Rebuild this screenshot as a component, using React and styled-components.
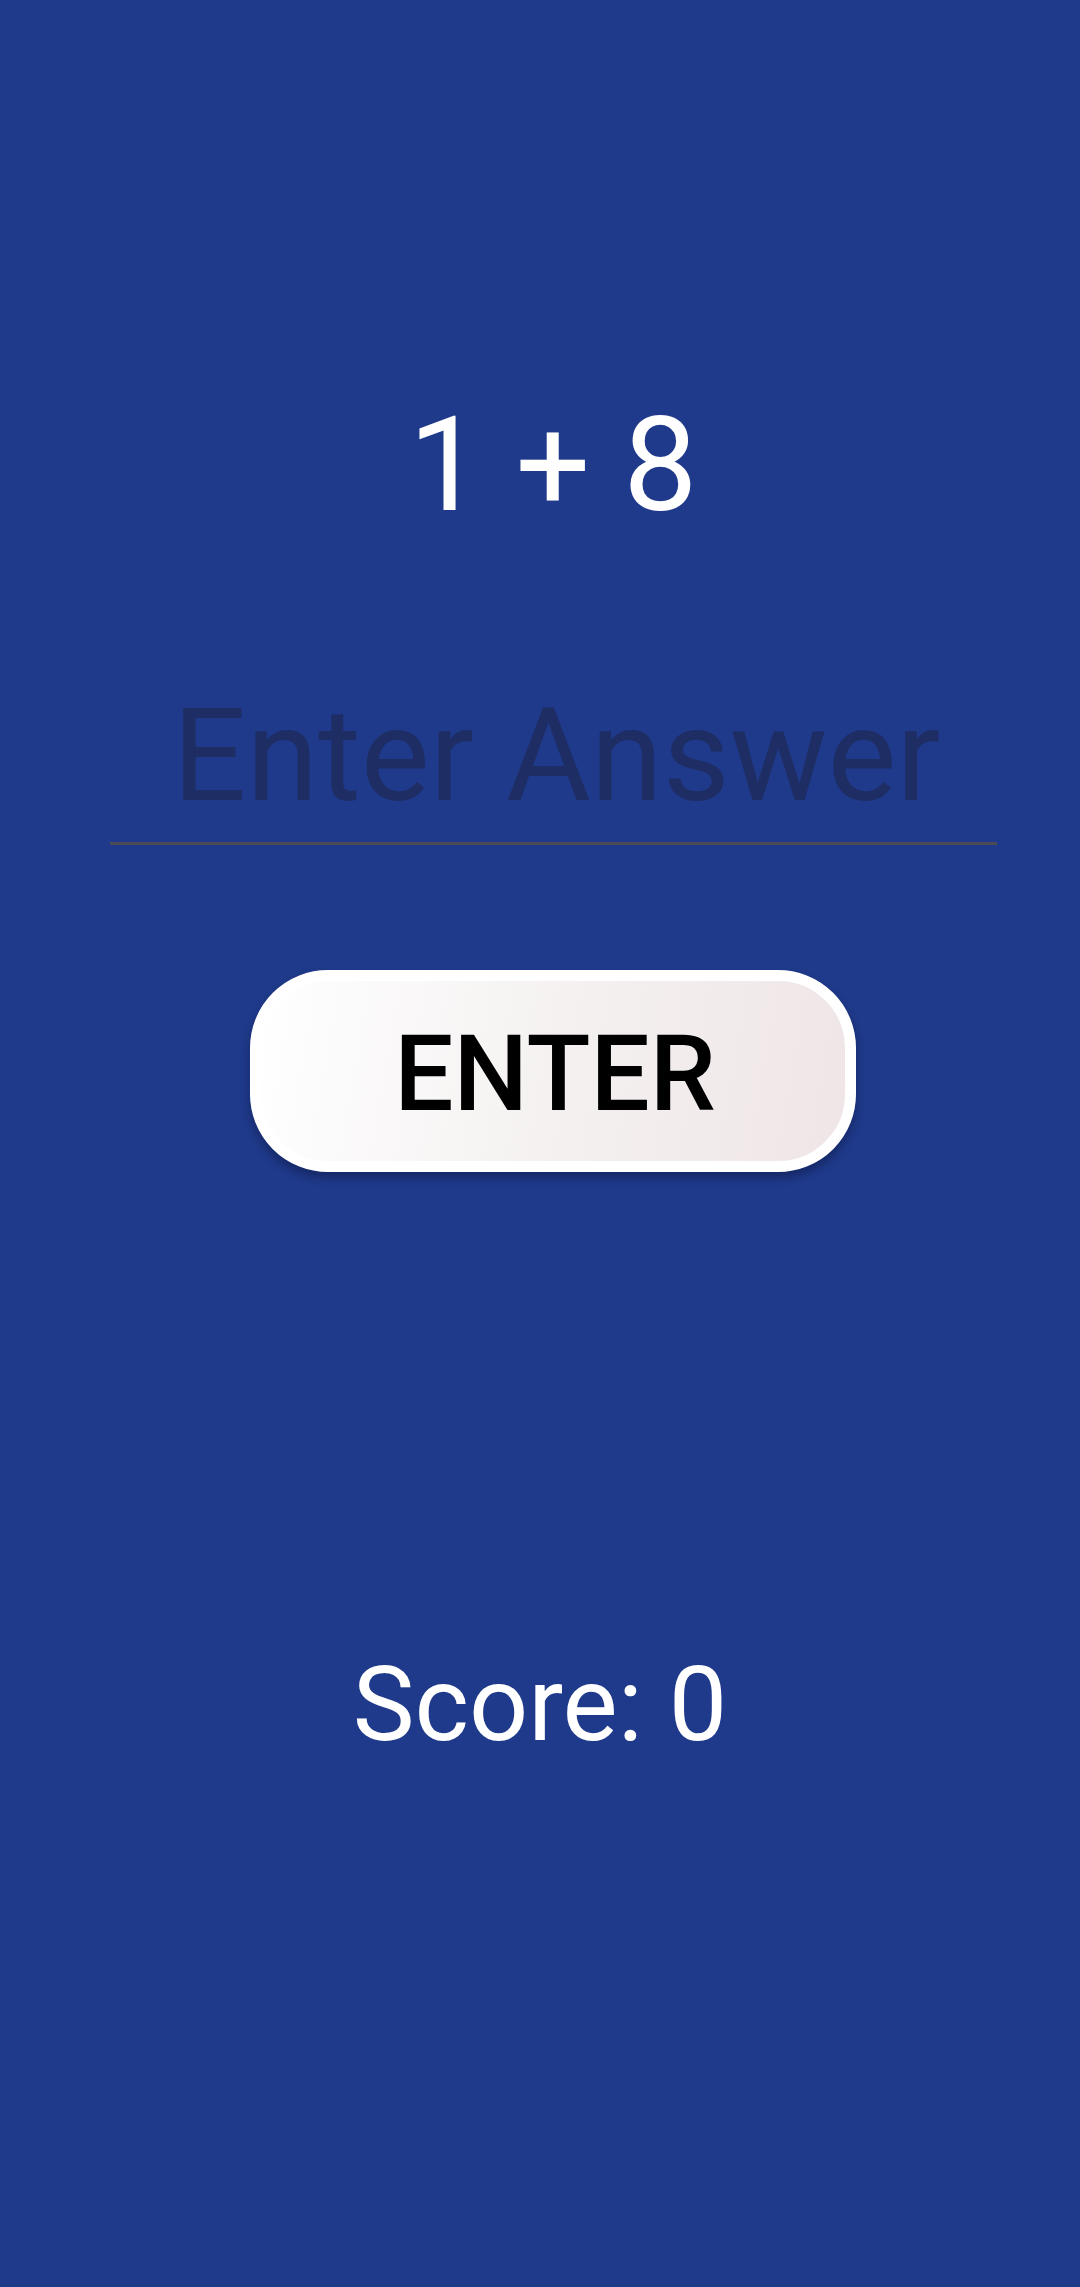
import React, { useState } from "react";
import styled, { createGlobalStyle } from "styled-components";

const GlobalStyle = createGlobalStyle`
  html, body {
    margin: 0;
    padding: 0;
    background: #1f3a8a;
  }
  * {
    box-sizing: border-box;
  }
`;

const Screen = styled.div`
  display: flex;
  flex-direction: column;
  align-items: center;
  width: 1080px;
  min-height: 2287px;
  padding-top: 399px;
  background: #1f3a8a;
  font-family: Roboto, "Liberation Sans", sans-serif;
`;

const Question = styled.div`
  font-size: 132px;
  line-height: 132px;
  color: #ffffff;
  padding-left: 26px;
`;

const AnswerRow = styled.div`
  display: flex;
  width: 100%;
  padding: 0 83px 0 110px;
  margin-top: 157px;
`;

const AnswerInput = styled.input`
  width: 100%;
  height: 157px;
  padding: 3px 0 22px 6px;
  border: none;
  border-bottom: 3px solid #4b4b55;
  background: transparent;
  font-family: Roboto, "Liberation Sans", sans-serif;
  font-size: 130px;
  line-height: 130px;
  color: #ffffff;
  text-align: center;
  outline: none;

  &::placeholder {
    color: #1e2d63;
  }
`;

const EnterButton = styled.button`
  display: flex;
  align-items: center;
  justify-content: center;
  width: 606px;
  height: 202px;
  margin-top: 125px;
  margin-left: 26px;
  padding: 6px 0 0 4px;
  border: 11px solid #ffffff;
  border-radius: 78px;
  background: linear-gradient(100deg, #ffffff 0%, #f5f1f1 50%, #efe5e6 100%);
  box-shadow: 0 6px 8px rgba(10, 20, 60, 0.45);
  font-family: Roboto, "Liberation Sans", sans-serif;
  font-weight: 500;
  font-size: 105px;
  line-height: 105px;
  color: #000000;
  cursor: pointer;
`;

const Score = styled.div`
  margin-top: 481px;
  font-size: 104px;
  line-height: 104px;
  color: #ffffff;
`;

const App = () => {
  const [answer, setAnswer] = useState("");
  const [score, setScore] = useState(0);
  const a = 1;
  const b = 8;

  const handleEnter = () => {
    if (Number(answer) === a + b) setScore(score + 1);
    setAnswer("");
  };

  return (
    <>
      <GlobalStyle />
      <Screen>
        <Question>
          {a} + {b}
        </Question>
        <AnswerRow>
          <AnswerInput
            type="text"
            placeholder="Enter Answer"
            value={answer}
            onChange={(e) => setAnswer(e.target.value)}
          />
        </AnswerRow>
        <EnterButton onClick={handleEnter}>ENTER</EnterButton>
        <Score>Score: {score}</Score>
      </Screen>
    </>
  );
};

export default App;
